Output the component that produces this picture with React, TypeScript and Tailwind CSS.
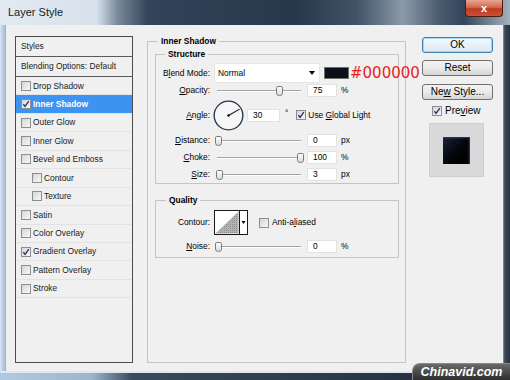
import React from "react";

const F = "font-['Liberation_Sans',Arial,sans-serif]";

function Check({ checked = false }: { checked?: boolean }) {
  return (
    <span className="relative inline-block w-[10px] h-[10px] shrink-0 border border-[#8e8e8e] bg-gradient-to-br from-[#d6d6d6] to-[#f8f8f8]">
      {checked && (
        <svg viewBox="0 0 8 8" className="absolute left-0 top-0 w-[8px] h-[8px]">
          <path d="M1.3 4.3 L3.1 6.3 L6.8 1.2" stroke="#253a72" strokeWidth="1.4" fill="none" />
        </svg>
      )}
    </span>
  );
}

function Thumb({ left }: { left: number }) {
  return (
    <svg
      viewBox="0 0 7 10"
      className="absolute top-1/2 -translate-y-1/2 w-[7px] h-[10px]"
      style={{ left }}
    >
      <defs>
        <linearGradient id="tg" x1="0" y1="0" x2="0" y2="1">
          <stop offset="0" stopColor="#ffffff" />
          <stop offset="1" stopColor="#d8d8d8" />
        </linearGradient>
      </defs>
      <path d="M1.8 0.5 H5.2 Q6.5 0.5 6.5 1.8 V7.2 Q6.5 9.5 3.5 9.5 Q0.5 9.5 0.5 7.2 V1.8 Q0.5 0.5 1.8 0.5 Z" fill="url(#tg)" stroke="#7c7c7c" strokeWidth="1" />
    </svg>
  );
}

function Slider({ v }: { v: number }) {
  return (
    <div className="relative shrink-0 ml-[4px] w-[90px] h-full flex items-center">
      <div className="ml-[3px] w-[84px] h-[2px] border-t border-b border-t-[#a4a4a4] border-b-white" />
      <Thumb left={0.5 + v * 82} />
    </div>
  );
}

function Field({ value, w = 30 }: { value: string; w?: number }) {
  return (
    <div
      className="shrink-0 h-[13px] bg-white border border-[#e2e2e2] pl-[5px] leading-[11px] text-[8.4px] text-black"
      style={{ width: w }}
    >
      {value}
    </div>
  );
}

function Label({ children }: { children: React.ReactNode }) {
  return <div className="w-[54px] shrink-0 text-right text-[8.4px] leading-none text-black">{children}</div>;
}

function SliderRow({ label, v, value, unit }: { label: React.ReactNode; v: number; value: string; unit: string }) {
  return (
    <div className="h-[17px] flex items-center">
      <Label>{label}</Label>
      <Slider v={v} />
      <div className="ml-[3px] shrink-0">
        <Field value={value} />
      </div>
      <span className="ml-[4px] shrink-0 text-[8.4px] leading-none text-black">{unit}</span>
    </div>
  );
}

function ListRow({
  label,
  checked = false,
  selected = false,
  indent = false,
}: {
  label: string;
  checked?: boolean;
  selected?: boolean;
  indent?: boolean;
}) {
  return (
    <div
      className={
        "h-[18.45px] flex items-center border-b border-[#e3e3e3] " +
        (selected ? "bg-[#3d93f2] text-white font-bold " : "text-[#1a1a1a] ") +
        (indent ? "pl-[16px]" : "pl-[5px]")
      }
    >
      <Check checked={checked} />
      <span className="ml-[2px] text-[8.4px] leading-none whitespace-nowrap">{label}</span>
    </div>
  );
}

export default function App() {
  return (
    <div className={"relative w-[510px] h-[380px] overflow-hidden flex flex-col bg-[#1c2530] " + F}>
      {/* Title bar */}
      <div className="h-[25px] flex justify-between bg-[linear-gradient(90deg,#e2eaf2_0%,#d7e1eb_19%,#7a8b9c_23%,#33445a_29%,#27384c_58%,#415366_70%,#8a9aaa_79%,#4c5d70_86%,#33455a_91%,#a4b3c1_100%)]">
        <div className="pl-[8px] flex items-center text-[11px] text-[#1b1b1b]">Layer Style</div>
        <div className="mr-[7px] w-[38px] h-[17px] rounded-b-[4px] border border-t-0 border-[#4a1c12] bg-[linear-gradient(180deg,#e9a592_0%,#d66a50_45%,#bf3a1c_55%,#c9513a_100%)] flex items-center justify-center">
          <span className="text-white text-[11px] font-bold leading-none">x</span>
        </div>
      </div>

      {/* Middle */}
      <div className="flex-1 flex">
        <div className="w-[6px] bg-[linear-gradient(90deg,#dfe9f3_0%,#bfd3e8_30%,#aac3dd_80%,#8ca6c2_100%)]" />
        <div className="flex-1 bg-[#f0f0f0] flex items-start pl-[9px] pt-[10px]">
          {/* Styles list */}
          <div className="mt-[1px] shrink-0 w-[118px] h-[327px] border border-[#4d4d4d] bg-[#f0f0f0] flex flex-col">
            <div className="h-[20px] flex items-center pl-[5px] border-b border-[#5a5a5a] text-[8.4px] text-[#1a1a1a]">Styles</div>
            <div className="h-[20px] flex items-center pl-[5px] border-b border-[#5a5a5a] text-[8.4px] text-[#1a1a1a] whitespace-nowrap">
              Blending Options: Default
            </div>
            <ListRow label="Drop Shadow" />
            <ListRow label="Inner Shadow" checked selected />
            <ListRow label="Outer Glow" />
            <ListRow label="Inner Glow" />
            <ListRow label="Bevel and Emboss" />
            <ListRow label="Contour" indent />
            <ListRow label="Texture" indent />
            <ListRow label="Satin" />
            <ListRow label="Color Overlay" />
            <ListRow label="Gradient Overlay" checked />
            <ListRow label="Pattern Overlay" />
            <ListRow label="Stroke" />
          </div>

          {/* Inner Shadow group */}
          <fieldset className="ml-[14px] shrink-0 w-[259px] h-[328px] border border-[#c4c4c4] p-0 m-0 min-w-0">
            <legend className="ml-[10px] px-[3px] text-[8.4px] leading-[12px] font-bold text-black">Inner Shadow</legend>

            <fieldset className="ml-[7px] mt-[1px] w-[244px] border border-[#c4c4c4] p-0 m-0 min-w-0 pb-0">
              <legend className="ml-[9px] px-[3px] text-[8.4px] leading-[12px] font-bold text-black">Structure</legend>
              <div className="mt-[3px] flex flex-col">
                <div className="h-[20px] flex items-center">
                  <Label>
                    B<u>l</u>end Mode:
                  </Label>
                  <div className="ml-[4px] shrink-0 w-[106px] h-[20px] bg-white border border-[#e6e6e6] flex items-center justify-between pl-[3px] pr-[4px]">
                    <span className="text-[8.4px] leading-none text-black">Normal</span>
                    <svg viewBox="0 0 6 4" className="w-[6px] h-[4px]">
                      <path d="M0 0 H6 L3 4 Z" fill="#000" />
                    </svg>
                  </div>
                  <div className="ml-[4px] shrink-0 w-[25px] h-[12px] bg-[#0b0f19] border border-[#6f6f6f]" />
                  <span className="ml-[1px] shrink-0 font-['DejaVu_Sans',sans-serif] text-[15px] leading-none text-[#e8231d] whitespace-nowrap">
                    #000000
                  </span>
                </div>
                <div className="h-[15px] flex items-center">
                  <Label>
                    <u>O</u>pacity:
                  </Label>
                  <Slider v={0.75} />
                  <div className="ml-[3px] shrink-0">
                    <Field value="75" />
                  </div>
                  <span className="ml-[4px] text-[8.4px] leading-none text-black">%</span>
                </div>
                <div className="h-[34px] flex items-center">
                  <Label>
                    <u>A</u>ngle:
                  </Label>
                  <svg viewBox="0 0 32 32" className="ml-[3px] shrink-0 w-[31px] h-[31px]">
                    <circle cx="16" cy="16" r="14.8" fill="#f6f6f6" stroke="#23344a" strokeWidth="1.4" />
                    <line x1="16" y1="16" x2="27.5" y2="9.4" stroke="#111" strokeWidth="1.1" />
                    <circle cx="16" cy="16" r="1.3" fill="#111" />
                  </svg>
                  <div className="ml-[3px] shrink-0">
                    <Field value="30" w={33} />
                  </div>
                  <span className="ml-[5px] self-start mt-[11px] text-[8.4px] leading-none text-black">°</span>
                  <span className="ml-[8px] shrink-0">
                    <Check checked />
                  </span>
                  <span className="ml-[2px] text-[8.4px] leading-none text-black whitespace-nowrap">
                    Use <u>G</u>lobal Light
                  </span>
                </div>
                <SliderRow label={<><u>D</u>istance:</>} v={0} value="0" unit="px" />
                <SliderRow label={<><u>C</u>hoke:</>} v={1} value="100" unit="%" />
                <SliderRow label={<><u>S</u>ize:</>} v={0.02} value="3" unit="px" />
              </div>
            </fieldset>

            <fieldset className="ml-[7px] mt-[10px] w-[244px] border border-[#c4c4c4] p-0 m-0 min-w-0 pb-[2px]">
              <legend className="ml-[10px] px-[3px] text-[8.4px] leading-[12px] font-bold text-black">Quality</legend>
              <div className="mt-[4px] h-[25px] flex items-center">
                <Label>Contour:</Label>
                <svg viewBox="0 0 34 25" className="ml-[4px] shrink-0 w-[34px] h-[25px]">
                  <defs>
                    <pattern id="dots" width="2" height="2" patternUnits="userSpaceOnUse">
                      <rect width="2" height="2" fill="#b4b4b4" />
                      <rect width="1" height="1" fill="#8a8a8a" />
                    </pattern>
                  </defs>
                  <rect x="0.5" y="0.5" width="33" height="24" fill="#fff" stroke="#1a1a1a" />
                  <polygon points="1.5,23.5 24.5,1.5 24.5,23.5" fill="url(#dots)" />
                  <line x1="25.5" y1="1" x2="25.5" y2="24" stroke="#1a1a1a" />
                  <path d="M27.5 11 H31.5 L29.5 14 Z" fill="#000" />
                </svg>
                <span className="ml-[11px] shrink-0">
                  <Check />
                </span>
                <span className="ml-[3px] text-[8.4px] leading-none text-black whitespace-nowrap">
                  Anti-a<u>l</u>iased
                </span>
              </div>
              <div className="mt-[3px]">
                <SliderRow label={<><u>N</u>oise:</>} v={0} value="0" unit="%" />
              </div>
            </fieldset>
          </fieldset>

          {/* Right column */}
          <div className="ml-[16px] mt-[2px] shrink-0 w-[71px] flex flex-col">
            <button className="h-[16px] rounded-[3px] border border-[#3c7fb1] bg-gradient-to-b from-[#f5fafe] to-[#dde8f1] shadow-[inset_0_0_0_1px_#a6d6f6] text-[10px] leading-none text-black">
              OK
            </button>
            <button className="mt-[7px] h-[16px] rounded-[3px] border border-[#707070] bg-gradient-to-b from-[#f3f3f3] via-[#eaeaea] to-[#d5d5d5] text-[10px] leading-none text-black">
              Reset
            </button>
            <button className="mt-[8px] h-[16px] rounded-[3px] border border-[#707070] bg-gradient-to-b from-[#f3f3f3] via-[#eaeaea] to-[#d5d5d5] text-[10px] leading-none text-black whitespace-nowrap">
              Ne<u>w</u> Style...
            </button>
            <div className="mt-[4px] h-[13px] flex items-center pl-[10px]">
              <Check checked />
              <span className="ml-[3px] text-[10px] leading-none text-black">
                Pre<u>v</u>iew
              </span>
            </div>
            <div className="mt-[6px] ml-[7px] w-[55px] h-[54px] bg-[#d9d9d9] border border-[#cfcfcf] flex items-center justify-center">
              <div className="w-[27px] h-[27px] bg-gradient-to-br from-[#1a2438] via-[#05070c] to-black shadow-[inset_-1px_1px_2px_#2d4066]" />
            </div>
          </div>
        </div>
        <div className="w-[7px] bg-[linear-gradient(90deg,#8b9aa8_0%,#3a4857_25%,#26323f_100%)]" />
      </div>

      {/* Bottom frame */}
      <div className="h-[9px] bg-[linear-gradient(90deg,#b3c9e0_0%,#9db5ce_18%,#3a4a5c_26%,#1f2a36_100%)] border-t-2 border-[#dfe7ef]" />

      {/* Watermark */}
      <div className="absolute right-0 bottom-0 w-[98px] h-[17px] rounded-tl-[8px] border-t border-l border-[#8a8a8a] bg-gradient-to-b from-[#6a6a6a] to-[#2e2e2e] flex items-center justify-center">
        <span className="text-white text-[12.5px] font-bold italic leading-none">Chinavid.com</span>
      </div>
    </div>
  );
}
